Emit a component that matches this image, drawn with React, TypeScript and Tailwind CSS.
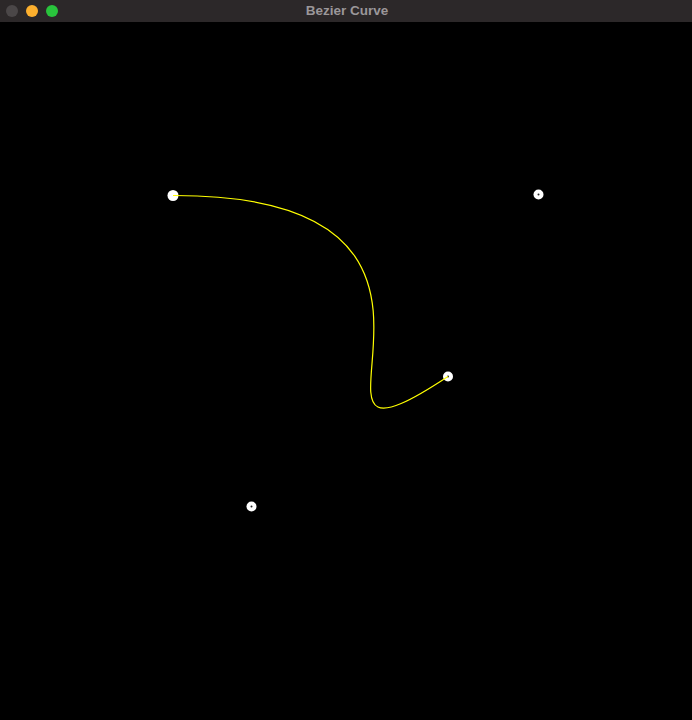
const points = [
  { x: 173, y: 173.5 },
  { x: 538.5, y: 172.5 },
  { x: 251.5, y: 484.5 },
  { x: 448, y: 354.5 },
];

export default function App() {
  const [p0, p1, p2, p3] = points;
  const d = `M ${p0.x} ${p0.y} C ${p1.x} ${p1.y}, ${p2.x} ${p2.y}, ${p3.x} ${p3.y}`;

  return (
    <div className="flex h-[720px] w-[692px] flex-col bg-black">
      {/* window chrome */}
      <div className="relative flex h-[22px] shrink-0 items-center bg-[#2c2829]">
        <div className="flex items-center gap-[8px] pl-[6px]">
          <span className="h-[12px] w-[12px] rounded-full bg-[#4b4748]" />
          <span className="h-[12px] w-[12px] rounded-full bg-[#fdb02e]" />
          <span className="h-[12px] w-[12px] rounded-full bg-[#29c43c]" />
        </div>
        <div className="flex-1 pr-[56px] text-center font-['Liberation_Sans',sans-serif] text-[13.5px] font-bold text-[#9b9799]">
          Bezier Curve
        </div>
      </div>

      {/* canvas */}
      <div className="flex-1">
        <svg width="692" height="698" viewBox="0 0 692 698" className="block">
          {points.map((p, i) => (
            <g key={i}>
              <circle cx={p.x} cy={p.y} r={i === 0 ? 5.5 : 5} fill="#ffffff" />
              {i > 0 && <circle cx={p.x} cy={p.y} r={1} fill="#222" />}
            </g>
          ))}
          <path d={d} fill="none" stroke="#ffff00" strokeWidth={1.2} />
        </svg>
      </div>
    </div>
  );
}
